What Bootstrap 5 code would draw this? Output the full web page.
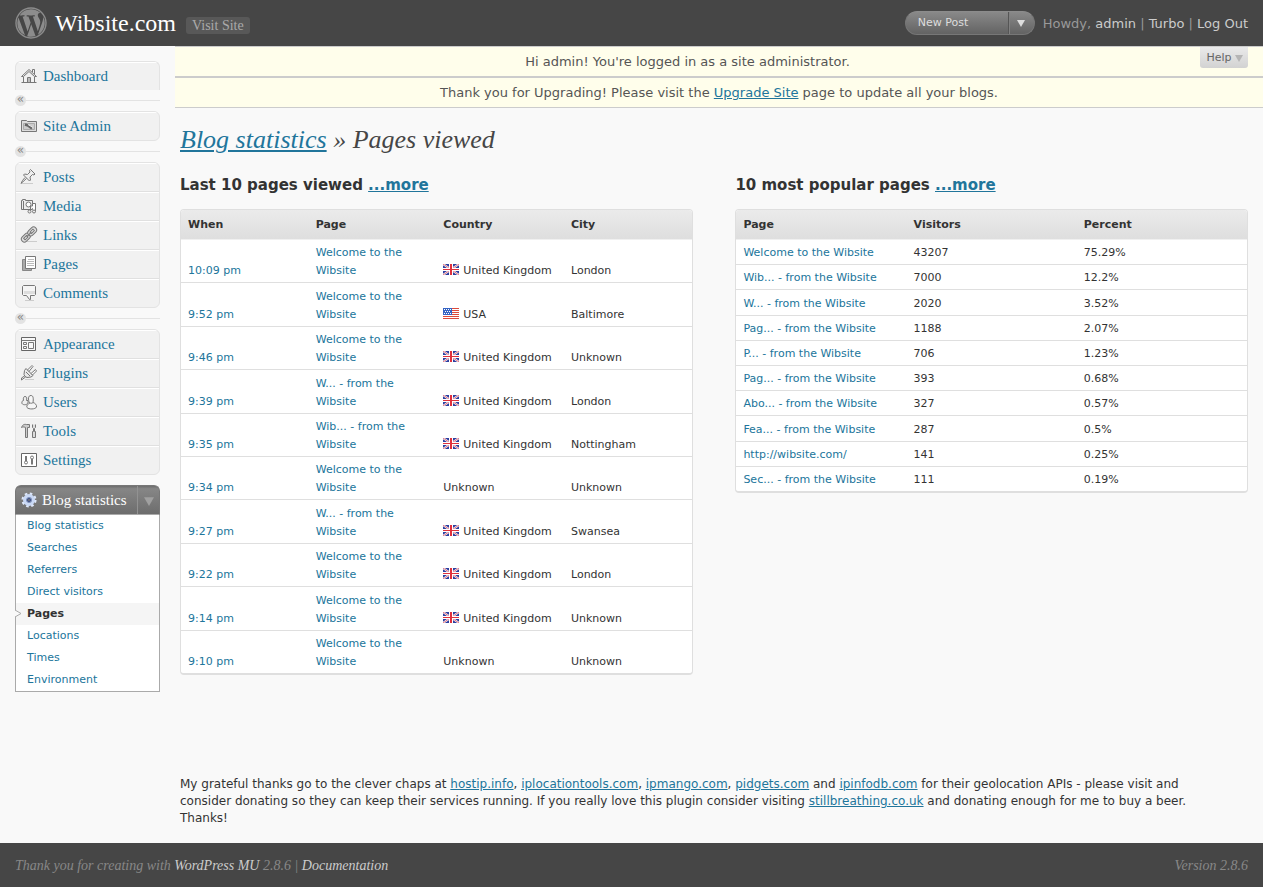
<!DOCTYPE html>
<html lang="en">
<head>
<meta charset="utf-8">
<meta name="viewport" content="width=device-width, initial-scale=1">
<title>Wibsite.com – Blog statistics</title>
<link href="https://cdn.jsdelivr.net/npm/bootstrap@5.3.0/dist/css/bootstrap.min.css" rel="stylesheet">
<style>
:root{--wp-link:#21759b;--wp-line:#dfdfdf;--wp-serif:Georgia,"Liberation Serif",serif;--wp-sans:Verdana,"DejaVu Sans",sans-serif}
body{font-family:var(--wp-sans);font-size:12px;line-height:17px;color:#333;background:#f9f9f9}
a{color:var(--wp-link)}
button{font-family:inherit}
.ico{width:18px;height:18px;fill:none;stroke:#777;stroke-width:1;flex:none}
.topbar{background:#464646;height:46px;padding:0 15px}
.topbar a{color:#ccc;text-decoration:none}
.wp-logo{width:32px;height:32px;fill:#8c8c8c}
.site-name{font:24px/32px var(--wp-serif);margin:0 10px 0 8px}
.topbar .site-name a{color:#fff}
.topbar .visit{font:14px/17px var(--wp-serif);color:#aaa;background:#585858;border-radius:3px;padding:0 6px;margin-top:4px}
.quick{height:24px;border-radius:12px;background:linear-gradient(#898989,#636363);overflow:hidden;border:1px solid #777;border-top-color:#8c8c8c;margin-right:8px}
.quick button{border:0;background:none;color:#ddd;font-size:11px;line-height:20px;padding:0;text-align:left}
.quick .act{width:102px;padding-left:12px}
.quick .drop{width:26px;border-left:1px solid #555;text-align:center;color:#ddd;box-shadow:inset 1px 0 #808080}
.quick svg,.helper svg,.current-head svg.tri{display:inline-block}
.howdy{font-size:13px;color:#999}
.side{width:160px;flex:none;padding:15px 0 0 15px}
.menu-box{border:1px solid #e3e3e3;border-radius:6px;overflow:hidden;background:#f1f1f1}
.menu-box a{display:flex;align-items:center;gap:5px;height:29px;padding-left:4px;font:15px/20px var(--wp-serif);color:var(--wp-link);text-decoration:none;box-shadow:inset 0 1px #fff}
.menu-box a+a{border-top:1px solid #e0e0e0}
.menu-box.solo{border-bottom:0;border-radius:6px 6px 0 0}
.menu-box a:first-child{height:28px}
.divider{height:21px}
.divider i{width:11px;height:11px;border-radius:50%;background:#e3e3e3;color:#888;font:12px/9px var(--wp-sans);text-align:center}
.divider span{height:1px;background:#e3e3e3}
.current-head{height:30px;margin-top:10px;border-radius:6px 6px 0 0;background:linear-gradient(#6d6d6d,#868686 10%,#6d6d6d);border:1px solid #777;border-bottom-color:#aaa}
.current-head a{font:15px/20px var(--wp-serif);color:#fff;text-decoration:none;gap:4px;padding-left:4px}
.current-head button{width:22px;border:0;border-left:1px solid #929292;background:none;padding:0;line-height:20px}
.submenu{border:1px solid #aaa;border-top:0;background:#fff}
.submenu a{display:block;font-size:11px;line-height:22px;padding-left:11px;text-decoration:none}
.submenu .on{background:#f5f5f5;color:#333;font-weight:bold;position:relative}
.submenu .on svg{position:absolute;left:-1px;top:6px}
.main{min-width:0;margin-left:15px}
.notice{background:#fffeeb;border:1px solid #ccc;border-width:1px 0;font-size:13px;line-height:29px;text-align:center;color:#555}
.notice.with-help{padding-right:63px}
.helper{position:absolute;right:15px;top:1px;height:21px;border:0;border-radius:0 0 3px 3px;background:linear-gradient(#eaeaea,#d2d2d2);color:#666;font-size:11px;line-height:20px;padding:0 5px 0 6px}
.content{padding:14px 15px 0 5px}
.page-title{font:italic 26px/36px var(--wp-serif);color:#464646;margin:0 0 17px}
.sub-title{font-size:15px;line-height:20px;font-weight:bold;margin:0 0 14px}
.stats{width:48%}
.grid-wrap{border:1px solid var(--wp-line);border-bottom-width:2px;border-radius:4px;overflow:hidden;background:#fff}
.grid{width:100%;table-layout:fixed;font-size:11px;line-height:18px;border-collapse:separate;border-spacing:0}
.grid th{height:29px;padding:0 7px;background:linear-gradient(#ebebeb,#dedede);font-weight:bold}
.grid td{padding:4px 7px 2px;vertical-align:bottom;border-top:1px solid var(--wp-line)}
.grid tr:first-child td{border-top-color:#f0f0f0}
.grid a{text-decoration:none}
.grid .flag{width:16px;height:11px;display:inline-block;vertical-align:-1px;margin-right:4px}
.recent{height:463px}
.popular{height:281px}
.thanks{font-size:12px;line-height:17px;margin:101px 0 16px;padding-right:25px}
.foot{background:#464646;color:#888;font:italic 14px/45px var(--wp-serif);padding:0 15px}
.foot a{color:#ccc;text-decoration:none}
</style>
</head>
<body class="d-flex flex-column min-vh-100">
<svg width="0" height="0" class="d-none" aria-hidden="true">
  <symbol id="uk" viewBox="0 0 16 11"><path fill="#2c3e9f" d="M0 0h16v11H0z"/><path stroke="#fff" stroke-width="2" d="M0 0l16 11M16 0L0 11"/><path stroke="#d8465a" stroke-width=".8" d="M0 0l16 11M16 0L0 11"/><path stroke="#fff" stroke-width="4" d="M8 0v11"/><path stroke="#fff" stroke-width="3" d="M0 5.500h16"/><path stroke="#e0303c" stroke-width="2" d="M8 0v11"/><path stroke="#e0303c" d="M0 5.500h16"/></symbol>
  <symbol id="us" viewBox="0 0 16 11"><path fill="#fff" d="M0 0h16v11H0z"/><path stroke="#dc4a3c" d="M0 .5h16M0 2.500h16M0 4.500h16M0 6.500h16M0 8.500h16M0 10.500h16"/><path fill="#3564c4" d="M0 0h9v7H0z"/><path stroke="#fff" stroke-dasharray="1 1" d="M1 1.500h7M2 3.500h6M1 5.500h7"/></symbol>
  <symbol id="down" viewBox="0 0 8 8"><path d="M0 1h8L4 8z"/></symbol>
</svg>

<header class="topbar d-flex align-items-center">
  <svg class="wp-logo" viewBox="0 0 16 16" aria-hidden="true"><path d="M12.633 7.653c0-.848-.305-1.435-.566-1.892l-.08-.13c-.317-.51-.594-.958-.594-1.480 0-.63.478-1.218 1.152-1.218l.089.006A6.840 6.840 0 0 0 8 1.137 6.860 6.860 0 0 0 2.266 4.230c.16.005.313.009.442.009.717 0 1.828-.087 1.828-.087.37-.022.414.521.044.565 0 0-.371.044-.785.065l2.500 7.434 1.500-4.506-1.070-2.929c-.369-.022-.719-.065-.719-.065-.37-.022-.326-.588.043-.566 0 0 1.134.087 1.808.087.718 0 1.830-.087 1.830-.087.37-.022.413.522.043.566 0 0-.372.043-.785.065l2.480 7.377.684-2.287.054-.173c.27-.86.469-1.495.469-2.046zM1.137 8a6.860 6.860 0 0 0 3.868 6.176L1.730 5.206A6.800 6.800 0 0 0 1.137 8M6.061 14.583 8.121 8.600l2.109 5.780q.02.05.049.094a6.850 6.850 0 0 1-4.218.109m7.960-9.876q.046.328.047.706c0 .696-.13 1.479-.522 2.458l-2.096 6.060a6.860 6.860 0 0 0 2.572-9.224z"/><circle cx="8" cy="8" r="7.500" fill="none" stroke="#8c8c8c" stroke-width=".7"/></svg>
  <h1 class="site-name"><a href="#">Wibsite.com</a></h1>
  <a class="visit" href="#">Visit Site</a>
  <div class="quick d-flex ms-auto">
    <button type="button" class="act">New Post</button>
    <button type="button" class="drop" aria-label="More actions"><svg width="8" height="8" fill="#ddd"><use href="#down"/></svg></button>
  </div>
  <div class="howdy">Howdy, <a href="#">admin</a> | <a href="#">Turbo</a> | <a href="#">Log Out</a></div>
</header>

<div class="d-flex flex-grow-1">
  <nav class="side" aria-label="Main menu">
    <div class="menu-box solo">
      <a href="#"><svg class="ico" viewBox="0 0 18 18"><path d="M1.500 9.500l7.500-7 7.500 7h-2L9 4.500l-5.500 5zM12.500 5V2.500h2v4.500M3.500 10v5.500h11V10M1.500 15.500h15M7.500 15.500v-5h3v5"/><path fill="#bbb" stroke="none" d="M8 11h2v4H8z"/></svg>Dashboard</a>
    </div>
    <div class="divider d-flex align-items-center"><i>«</i><span class="flex-grow-1"></span></div>
    <div class="menu-box">
      <a href="#"><svg class="ico" viewBox="0 0 18 18"><path fill="#ddd" d="M1.500 14.500v-11h5l1 1h9v10z"/><path fill="#ccc" stroke="#aaa" d="M3.500 6.500h11v6h-11z"/><path stroke="#666" stroke-width="2.500" d="M5 7.500l3 1 4 3"/><path stroke="#eee" d="M8 7.500l5 3"/></svg>Site Admin</a>
    </div>
    <div class="divider d-flex align-items-center"><i>«</i><span class="flex-grow-1"></span></div>
    <div class="menu-box">
      <a href="#"><svg class="ico" viewBox="0 0 18 18"><path stroke="#ccc" d="M2 15.500h11"/><path fill="#eee" d="M9.500 2.500l1-1 4.500 4.500-1 1-1.500-.5-2.500 2.500.5 3-1 1-6-6 1-1 3 .5L10 4z"/><path d="M6.500 10.500L1 15.500l1.500-3 2.500-3"/></svg>Posts</a>
      <a href="#"><svg class="ico" viewBox="0 0 18 18"><path fill="#eee" d="M1.500 12.500v-9h1v-1h3v1h7v9z"/><path d="M3.500 4v8"/><circle cx="8.500" cy="7.500" r="2.500" fill="#fff"/><path fill="#fff" d="M10.500 14.500V9M15.500 14.500V6.500h-3V9h-2"/><circle cx="9.500" cy="14.500" r="1.500" fill="#eee"/><circle cx="14" cy="14.500" r="1.500" fill="#eee"/></svg>Media</a>
      <a href="#"><svg class="ico" viewBox="0 0 18 18"><path stroke="#ccc" d="M5 15.500h12"/><g transform="rotate(-45 9 8.500)"><rect x="-.5" y="5.500" width="10" height="6" rx="3" fill="#ddd"/><rect x="8.500" y="5.500" width="10" height="6" rx="3" fill="#ddd"/><path fill="#f1f1f1" d="M2.500 7.500h4v2h-4zM11.500 7.500h4v2h-4z"/><path d="M6 8.500h6"/></g></svg>Links</a>
      <a href="#"><svg class="ico" viewBox="0 0 18 18"><path fill="#aaa" stroke="#888" d="M2.500 4.500h9v11h-9z"/><path fill="#fff" d="M5.500 1.500h10v12h-10z"/><path stroke="#bbb" d="M8 4.500h6M7 6.500h7M7 8.500h7M7 10.500h7"/></svg>Pages</a>
      <a href="#"><svg class="ico" viewBox="0 0 18 18"><path stroke="#ccc" d="M5 16.500h9"/><path fill="#f5f5f5" d="M3.500 1.500h11l1 1v8l-1 1h-4v4h-1l-3-4h-3l-1-1v-8z"/><path stroke="#ddd" stroke-width="3" d="M4 8.500h11"/></svg>Comments</a>
    </div>
    <div class="divider d-flex align-items-center"><i>«</i><span class="flex-grow-1"></span></div>
    <div class="menu-box">
      <a href="#"><svg class="ico" viewBox="0 0 18 18"><path stroke="#666" fill="#f8f8f8" d="M1.500 2.500h14v13h-14z"/><path d="M1.500 5.500h14M8.500 7.500h5v6h-5zM3.500 7.500h3v2h-3zM3.500 11.500h3v2h-3z"/></svg>Appearance</a>
      <a href="#"><svg class="ico" viewBox="0 0 18 18"><path stroke="#ccc" d="M5 15.500h9"/><path fill="#e8e8e8" d="M6 4.500l7 7-2 1.500-4 .5-2-1-1-2 .5-4z"/><path fill="#fff" d="M7.500 6L12 1.500l1 1L9 7.500zM11 9.500l4.500-4 1 1.500-4 4z"/><path d="M4.500 12L1.500 14v2l4-3M6 8l4 4"/></svg>Plugins</a>
      <a href="#"><svg class="ico" viewBox="0 0 18 18"><path fill="#eee" d="M5 3.500c2 0 2 2 1.500 4H8c1 5-5 5-6 3-.5-2 .5-3 1.500-3C3 5 3.500 3.500 5 3.500z"/><path fill="#f6f6f6" d="M11 2.500c2.500 0 2.500 3.500 2 7 2 .5 4 2.500 3.500 4.500-1 2.500-8 2.500-9.500.5-1-2 1-3.500 2.500-4C8 6 8 2.500 11 2.500z"/><path d="M9.500 9.500c1 1 2.500 1 3.500 0"/></svg>Users</a>
      <a href="#"><svg class="ico" viewBox="0 0 18 18"><path fill="#ccc" d="M1.500 5.500c1-3 3-3.500 5-3h3v3h-2v10h-2v-10c-2-1-3-.5-4 0z"/><path fill="#ddd" d="M12.500 2.500v3l1 1v3h-1v6h3v-6h-1v-3l1-1v-3"/></svg>Tools</a>
      <a href="#"><svg class="ico" viewBox="0 0 18 18"><path stroke="#666" fill="#fff" d="M1.500 2.500h15v13h-15z"/><circle cx="6" cy="11.500" r="1.500"/><path stroke-width="2" d="M6 10V5"/><circle cx="12" cy="6.500" r="1.500"/><path stroke-width="2" d="M12 8v5.500"/></svg>Settings</a>
    </div>
    <div class="current-head d-flex">
      <a href="#" class="d-flex align-items-center flex-grow-1"><svg class="ico" viewBox="0 0 18 18"><circle cx="9" cy="9" r="6.300" stroke="#dfe8fa" stroke-width="2.500" stroke-dasharray="2.500 2.450"/><circle cx="9" cy="9" r="4.500" fill="#7c8db5" stroke="#c9d8f5" stroke-width="3"/><circle cx="9" cy="9" r="1.500" fill="#777" stroke="#3e4f86"/></svg>Blog statistics</a>
      <button type="button" aria-label="Toggle menu"><svg class="tri" width="10" height="10" fill="#a0a0a0"><use href="#down"/></svg></button>
    </div>
    <div class="submenu">
      <a href="#">Blog statistics</a>
      <a href="#">Searches</a>
      <a href="#">Referrers</a>
      <a href="#">Direct visitors</a>
      <a href="#" class="on"><svg width="7" height="9" fill="#f9f9f9" stroke="#aaa"><path d="M0 1l6 3.500L0 8"/></svg>Pages</a>
      <a href="#">Locations</a>
      <a href="#">Times</a>
      <a href="#">Environment</a>
    </div>
  </nav>

  <div class="main flex-grow-1">
    <div class="position-relative">
      <div class="notice with-help">Hi admin! You're logged in as a site administrator.</div>
      <button type="button" class="helper">Help <svg width="8" height="8" fill="#b5b5b5"><use href="#down"/></svg></button>
    </div>
    <div class="notice">Thank you for Upgrading! Please visit the <a href="#">Upgrade Site</a> page to update all your blogs.</div>
    <main class="content">
      <h2 class="page-title"><a href="#">Blog statistics</a> » Pages viewed</h2>
      <div class="d-flex justify-content-between align-items-start">
        <section class="stats">
          <h3 class="sub-title">Last 10 pages viewed <a href="#">...more</a></h3>
          <div class="grid-wrap">
          <table class="grid recent">
            <thead><tr><th>When</th><th>Page</th><th>Country</th><th>City</th></tr></thead>
            <tbody>
              <tr><td><a href="#">10:09 pm</a></td><td><a href="#">Welcome to the Wibsite</a></td><td class="text-nowrap"><svg class="flag"><use href="#uk"/></svg>United Kingdom</td><td>London</td></tr>
              <tr><td><a href="#">9:52 pm</a></td><td><a href="#">Welcome to the Wibsite</a></td><td class="text-nowrap"><svg class="flag"><use href="#us"/></svg>USA</td><td>Baltimore</td></tr>
              <tr><td><a href="#">9:46 pm</a></td><td><a href="#">Welcome to the Wibsite</a></td><td class="text-nowrap"><svg class="flag"><use href="#uk"/></svg>United Kingdom</td><td>Unknown</td></tr>
              <tr><td><a href="#">9:39 pm</a></td><td><a href="#">W... - from the Wibsite</a></td><td class="text-nowrap"><svg class="flag"><use href="#uk"/></svg>United Kingdom</td><td>London</td></tr>
              <tr><td><a href="#">9:35 pm</a></td><td><a href="#">Wib... - from the Wibsite</a></td><td class="text-nowrap"><svg class="flag"><use href="#uk"/></svg>United Kingdom</td><td>Nottingham</td></tr>
              <tr><td><a href="#">9:34 pm</a></td><td><a href="#">Welcome to the Wibsite</a></td><td>Unknown</td><td>Unknown</td></tr>
              <tr><td><a href="#">9:27 pm</a></td><td><a href="#">W... - from the Wibsite</a></td><td class="text-nowrap"><svg class="flag"><use href="#uk"/></svg>United Kingdom</td><td>Swansea</td></tr>
              <tr><td><a href="#">9:22 pm</a></td><td><a href="#">Welcome to the Wibsite</a></td><td class="text-nowrap"><svg class="flag"><use href="#uk"/></svg>United Kingdom</td><td>London</td></tr>
              <tr><td><a href="#">9:14 pm</a></td><td><a href="#">Welcome to the Wibsite</a></td><td class="text-nowrap"><svg class="flag"><use href="#uk"/></svg>United Kingdom</td><td>Unknown</td></tr>
              <tr><td><a href="#">9:10 pm</a></td><td><a href="#">Welcome to the Wibsite</a></td><td>Unknown</td><td>Unknown</td></tr>
            </tbody>
          </table>
          </div>
        </section>
        <section class="stats">
          <h3 class="sub-title">10 most popular pages <a href="#">...more</a></h3>
          <div class="grid-wrap">
          <table class="grid popular">
            <thead><tr><th>Page</th><th>Visitors</th><th>Percent</th></tr></thead>
            <tbody>
              <tr><td><a href="#">Welcome to the Wibsite</a></td><td>43207</td><td>75.29%</td></tr>
              <tr><td><a href="#">Wib... - from the Wibsite</a></td><td>7000</td><td>12.2%</td></tr>
              <tr><td><a href="#">W... - from the Wibsite</a></td><td>2020</td><td>3.52%</td></tr>
              <tr><td><a href="#">Pag... - from the Wibsite</a></td><td>1188</td><td>2.07%</td></tr>
              <tr><td><a href="#">P... - from the Wibsite</a></td><td>706</td><td>1.23%</td></tr>
              <tr><td><a href="#">Pag... - from the Wibsite</a></td><td>393</td><td>0.68%</td></tr>
              <tr><td><a href="#">Abo... - from the Wibsite</a></td><td>327</td><td>0.57%</td></tr>
              <tr><td><a href="#">Fea... - from the Wibsite</a></td><td>287</td><td>0.5%</td></tr>
              <tr><td><a href="#">http://wibsite.com/</a></td><td>141</td><td>0.25%</td></tr>
              <tr><td><a href="#">Sec... - from the Wibsite</a></td><td>111</td><td>0.19%</td></tr>
            </tbody>
          </table>
          </div>
        </section>
      </div>
      <p class="thanks">My grateful thanks go to the clever chaps at <a href="#">hostip.info</a>, <a href="#">iplocationtools.com</a>, <a href="#">ipmango.com</a>, <a href="#">pidgets.com</a> and <a href="#">ipinfodb.com</a> for their geolocation APIs - please visit and consider donating so they can keep their services running. If you really love this plugin consider visiting <a href="#">stillbreathing.co.uk</a> and donating enough for me to buy a beer. Thanks!</p>
    </main>
  </div>
</div>

<footer class="foot d-flex justify-content-between">
  <span>Thank you for creating with <a href="#">WordPress MU</a> 2.8.6 | <a href="#">Documentation</a></span>
  <span>Version 2.8.6</span>
</footer>
<script src="https://cdn.jsdelivr.net/npm/bootstrap@5.3.0/dist/js/bootstrap.bundle.min.js"></script>
</body>
</html>
